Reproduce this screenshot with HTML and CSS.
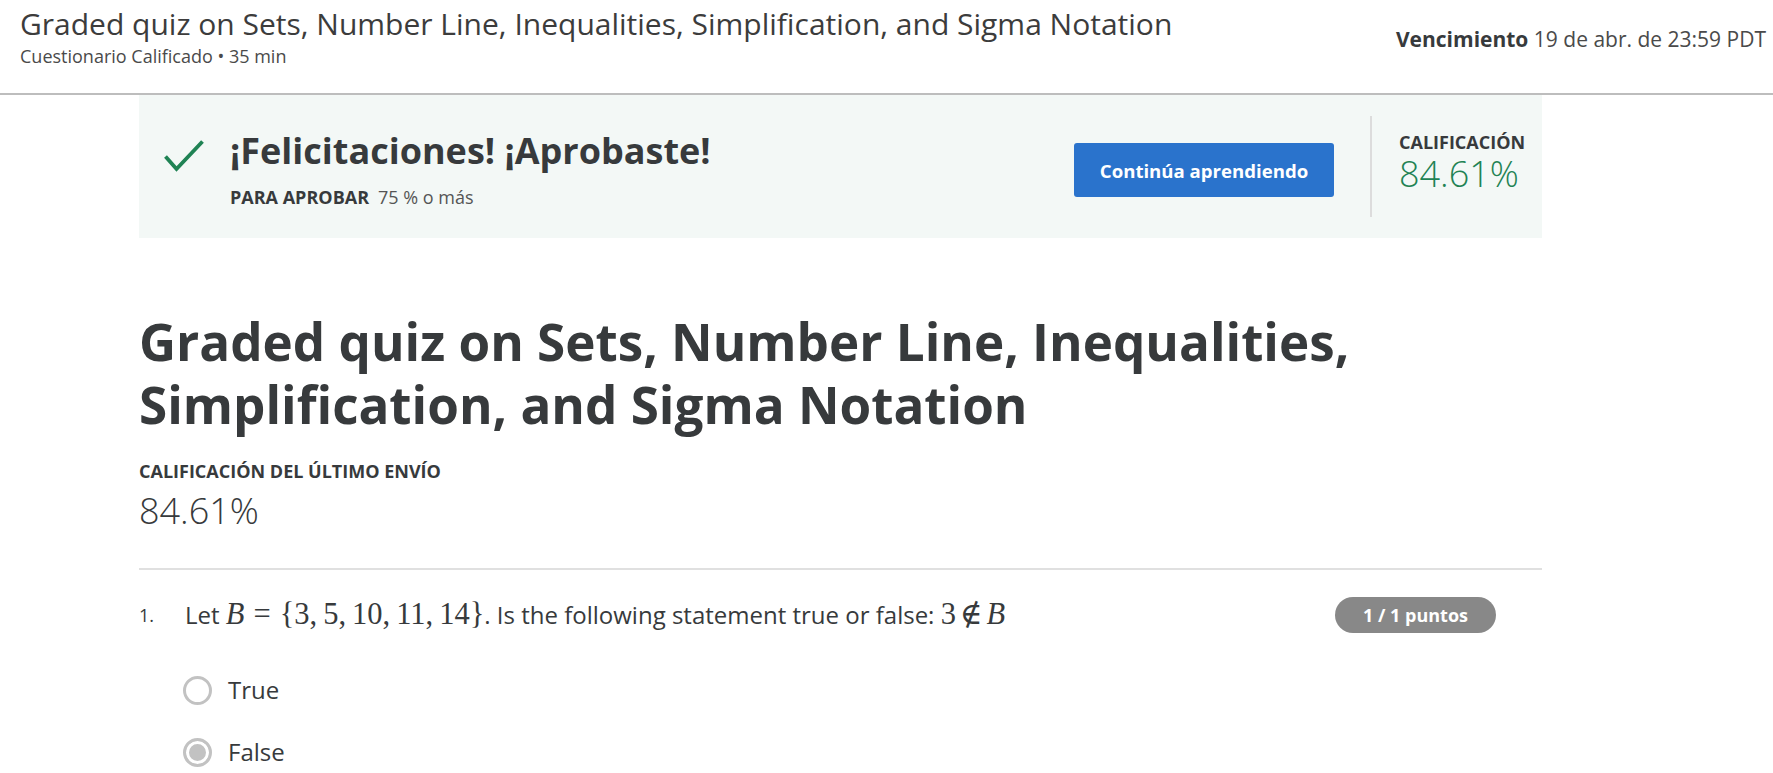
FILE: index.html
```html
<!DOCTYPE html>
<html lang="es">
<head>
<meta charset="utf-8">
<title>Graded quiz</title>
<link rel="stylesheet" href="styles.css">
</head>
<body>
<header class="topbar">
  <div class="topbar-left">
    <div class="topbar-title">Graded quiz on Sets, Number Line, Inequalities, Simplification, and Sigma Notation</div>
    <div class="topbar-sub">Cuestionario Calificado • 35 min</div>
  </div>
  <div class="due"><b>Vencimiento</b> 19 de abr. de 23:59 PDT</div>
</header>
<main class="content">
  <section class="result-banner">
    <div class="result-main">
      <svg class="check" width="40" height="32" viewBox="0 0 40 32" aria-hidden="true">
        <polyline points="1.5,16.5 12.5,29 38.5,1.5" fill="none" stroke="#1f8354" stroke-width="3.8"/>
      </svg>
      <div class="result-text">
        <div class="result-heading">¡Felicitaciones! ¡Aprobaste!</div>
        <div class="pass"><b>PARA APROBAR</b><span>75 % o más</span></div>
      </div>
    </div>
    <button class="btn-primary">Continúa aprendiendo</button>
    <div class="divider"></div>
    <div class="grade-box">
      <div class="grade-label">CALIFICACIÓN</div>
      <div class="grade-value">84.61%</div>
    </div>
  </section>

  <h1 class="quiz-title">Graded quiz on Sets, Number Line, Inequalities, Simplification, and Sigma Notation</h1>
  <div class="last-label">CALIFICACIÓN DEL ÚLTIMO ENVÍO</div>
  <div class="last-value">84.61%</div>
  <div class="rule"></div>

  <section class="question">
    <div class="q-head">
      <span class="q-num">1.</span>
      <div class="q-text">Let <span class="math"><i>B</i><span class="rel">=</span>{3,<span class="th"></span>5,<span class="th"></span>10,<span class="th"></span>11,<span class="th"></span>14}</span>. Is the following statement true or false: <span class="math">3<span class="rel rel-narrow">∉</span><i>B</i></span></div>
      <span class="badge">1 / 1 puntos</span>
    </div>
    <div class="options">
      <div class="option"><span class="radio"></span><span class="opt-label">True</span></div>
      <div class="option"><span class="radio checked"></span><span class="opt-label">False</span></div>
    </div>
  </section>
</main>
</body>
</html>
```

FILE: styles.css
```css
* { box-sizing: border-box; }
html, body { margin: 0; padding: 0; background: #fff; }
body {
  font-family: "Open Sans", "Noto Sans", sans-serif;
  color: #373a3c;
}

.topbar {
  display: flex;
  justify-content: space-between;
  align-items: flex-start;
  height: 95px;
  border-bottom: 2px solid #bdbdbd;
  padding: 6px 7px 0 20px;
}
.topbar-title {
  font-size: 30px;
  line-height: 36px;
  color: #3c3c3c;
}
.topbar-sub {
  margin-top: 2px;
  font-size: 18px;
  line-height: 24px;
  color: #4a4a4a;
}
.due {
  margin-top: 19px;
  font-size: 21px;
  line-height: 28px;
  color: #4a4a4a;
}
.due b { color: #373a3c; }

.content {
  margin-left: 139px;
  width: 1403px;
}

.result-banner {
  display: flex;
  align-items: center;
  height: 143px;
  background: #f3f8f6;
  padding: 0 19px 0 25px;
}
.result-main {
  display: flex;
  align-items: flex-start;
  gap: 26px;
  margin-top: 6px;
}
.check { margin-top: 9px; display: block; }
.result-heading {
  font-size: 36px;
  font-weight: 700;
  line-height: 40px;
  color: #373a3c;
}
.pass {
  margin-top: 14px;
  font-size: 18px;
  line-height: 24px;
  display: flex;
  gap: 9px;
}
.pass b { font-weight: 700; }
.pass span { color: #555; }

.btn-primary {
  margin-left: auto;
  margin-top: 7px;
  width: 260px;
  height: 54px;
  background: #2a73cc;
  color: #fff;
  border: none;
  border-radius: 3px;
  font-family: "Open Sans", sans-serif;
  font-size: 18.6px;
  font-weight: 700;
}
.divider {
  width: 2px;
  height: 101px;
  background: #dcdcdc;
  margin-left: 36px;
  margin-right: 27px;
}
.grade-box {
  width: 124px;
  margin-bottom: 10px;
}
.grade-label {
  font-size: 18px;
  font-weight: 700;
  line-height: 24px;
  color: #373a3c;
  white-space: nowrap;
}
.grade-value {
  font-size: 36px;
  font-weight: 300;
  line-height: 40px;
  color: #1f8354;
}

.quiz-title {
  margin: 72px 0 0;
  font-size: 51.2px;
  font-weight: 700;
  line-height: 63px;
  color: #373a3c;
}
.last-label {
  margin-top: 23px;
  font-size: 18px;
  font-weight: 700;
  line-height: 24px;
}
.last-value {
  margin-top: 4px;
  font-size: 36px;
  font-weight: 300;
  line-height: 48px;
}
.rule {
  margin-top: 33px;
  height: 2px;
  background: #e0e0e0;
}

.question { margin-top: 27px; }
.q-head {
  display: flex;
  align-items: center;
  padding-right: 46px;
}
.q-num {
  width: 46px;
  font-size: 18px;
  line-height: 36px;
}
.q-text {
  flex: 1;
  font-size: 24px;
  line-height: 36px;
}
.math {
  font-family: "Liberation Serif", "DejaVu Serif", serif;
  font-size: 30.5px;
  line-height: 0;
}
.math i { font-style: italic; }
.rel { padding: 0 9px; }
.rel-narrow { padding: 0 4px; }
.th { display: inline-block; width: 6px; }
.badge {
  height: 36px;
  line-height: 36px;
  padding: 0 28px;
  border-radius: 18px;
  background: #888;
  color: #fff;
  font-size: 18px;
  font-weight: 700;
}

.options {
  margin-top: 39px;
  padding-left: 44px;
  display: flex;
  flex-direction: column;
  gap: 26px;
}
.option {
  display: flex;
  align-items: center;
  height: 36px;
  gap: 16px;
}
.radio {
  width: 29px;
  height: 29px;
  border: 3px solid #c2c2c2;
  border-radius: 50%;
  background: #fff;
}
.radio.checked {
  background: #c2c2c2;
  box-shadow: inset 0 0 0 3px #fff;
}
.opt-label {
  font-size: 24px;
  line-height: 36px;
}
```
